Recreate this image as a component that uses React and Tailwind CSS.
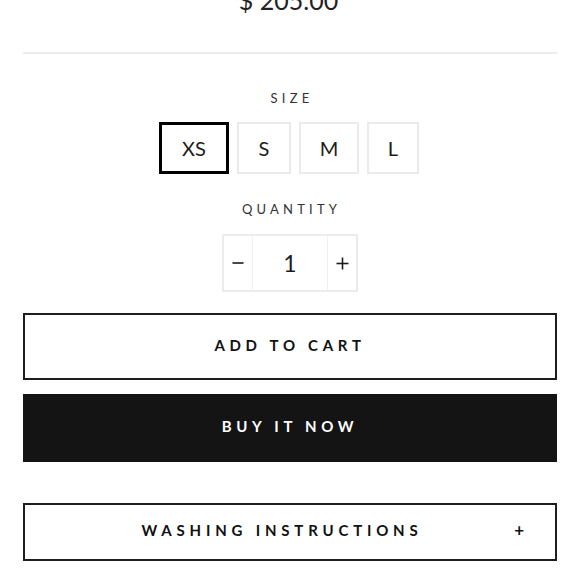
import React from "react";

export default function App() {
  const font = { fontFamily: "Lato, 'Open Sans', 'Liberation Sans', sans-serif" };
  const sizes = [
    { label: "XS", w: "w-[70px]", active: true },
    { label: "S", w: "w-[54px]" },
    { label: "M", w: "w-[60px]" },
    { label: "L", w: "w-[52px]" },
  ];
  return (
    <div className="w-[580px] h-[580px] overflow-hidden bg-white text-[#1c1c1c]" style={font}>
      <div className="px-[23px] flex flex-col items-center">
        <div className="mt-[-15px] h-[30px] leading-[30px] text-[25px] font-normal text-[#222] pr-[3px]">
          $ 205.00
        </div>
        <div className="mt-[37px] w-full h-[2px] bg-[#ececec]" />
        <div className="mt-[36px] h-[16px] leading-[16px] text-[13px] tracking-[4.3px] pl-[4px] text-[#333]">
          SIZE
        </div>
        <div className="mt-[16px] flex gap-2 items-center pr-[2px]">
          {sizes.map((s) => (
            <div
              key={s.label}
              className={
                s.active
                  ? `${s.w} h-[52px] border-[3px] border-black flex items-center justify-center text-[20px] font-normal`
                  : `${s.w} h-[52px] border-2 border-[#ebebeb] flex items-center justify-center text-[20px] font-normal`
              }
            >
              {s.label}
            </div>
          ))}
        </div>
        <div className="mt-[27px] h-[16px] leading-[16px] text-[13px] tracking-[4.2px] pl-[3px] text-[#333]">
          QUANTITY
        </div>
        <div className="mt-[17px] flex h-[58px] border-2 border-[#ececec]">
          <div className="w-[29px] flex items-center justify-center border-r border-[#f0f0f0]">
            <svg width="12" height="12" viewBox="0 0 12 12">
              <line x1="0.5" y1="6" x2="11.5" y2="6" stroke="#1c1c1c" strokeWidth="1.6" />
            </svg>
          </div>
          <div className="w-[75px] flex items-center justify-center text-[23px] font-normal border-r border-[#f0f0f0]">1</div>
          <div className="w-[28px] flex items-center justify-center">
            <svg width="13" height="13" viewBox="0 0 13 13">
              <line x1="0.5" y1="6.5" x2="12.5" y2="6.5" stroke="#1c1c1c" strokeWidth="1.6" />
              <line x1="6.5" y1="0.5" x2="6.5" y2="12.5" stroke="#1c1c1c" strokeWidth="1.6" />
            </svg>
          </div>
        </div>
        <button className="mt-[21px] w-full h-[67px] border-2 border-[#1e1e1e] bg-white flex items-center justify-center text-[15px] font-bold tracking-[4.7px] pb-[2px] text-[#111]">
          ADD TO CART
        </button>
        <button className="mt-[14px] w-full h-[68px] bg-[#141414] text-white flex items-center justify-center text-[15px] font-bold tracking-[4.7px] pb-[3px]">
          BUY IT NOW
        </button>
        <button className="relative mt-[41px] w-full h-[58px] border-2 border-[#1e1e1e] bg-white flex items-center justify-center text-[15px] font-bold tracking-[4.8px] pr-[16px] pb-[4px] text-[#111]">
          WASHING INSTRUCTIONS
          <span className="absolute right-[31px] top-[12px] text-[17px] font-bold tracking-normal">+</span>
        </button>
      </div>
    </div>
  );
}
